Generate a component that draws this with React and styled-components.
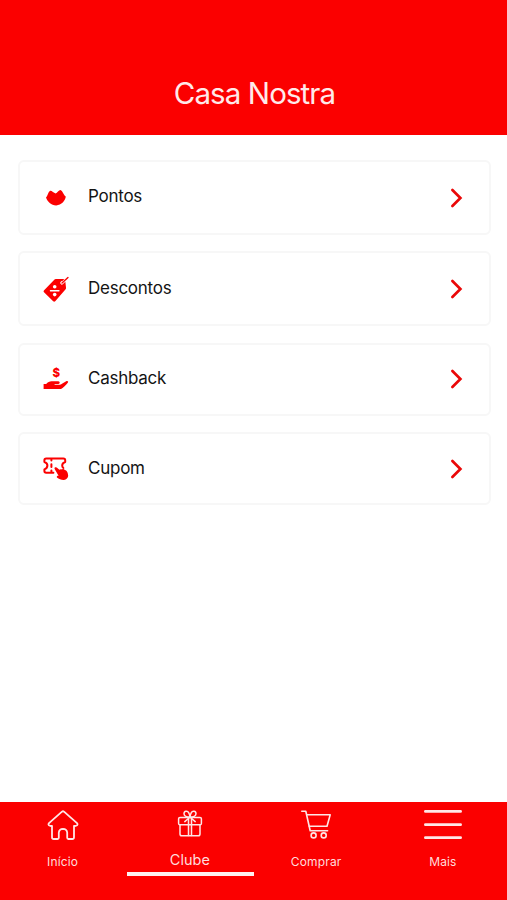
import React from 'react';
import styled, { createGlobalStyle } from 'styled-components';

const RED = '#fb0000';

const PointsIcon = () => (
  <RowIcon viewBox="0 0 28 28">
    <path
      fill={RED}
      d="M4 13.6 C5.4 12.4 6.2 8.2 7.8 7 C9.4 6.2 11.6 9 13.6 9.4 C15.2 9 16.8 6 18.4 6 C20.6 6.6 21.6 11 23.8 12.6 C23.4 16.8 19.4 21.2 14.2 21.4 C9.2 21.4 5.4 17.8 4 13.6 Z"
    />
  </RowIcon>
);

const DiscountIcon = () => (
  <RowIcon viewBox="0 0 28 28">
    <path fill={RED} d="M1.9 15.4 L11.8 5.2 Q12.8 4.2 14 4.1 L21.2 3.9 Q23 3.9 23.2 5.6 L24 12.4 Q24.2 13.6 23.4 14.6 L13.2 26.3 Q12.2 27.2 11.2 26.3 L2 17.2 Q1.1 16.3 1.9 15.4 Z" />
    <circle cx="20" cy="7.6" r="1.5" fill="#fff" />
    <path d="M19 9 L26 2.6" stroke="#fff" strokeWidth="2.6" />
    <path d="M20 8 L26 2.6" stroke={RED} strokeWidth="1.4" strokeLinecap="round" />
    <g fill="#fff">
      <circle cx="12.7" cy="11.7" r="1.8" />
      <circle cx="12.7" cy="19.6" r="1.8" />
      <rect x="7.8" y="14.9" width="9.8" height="1.5" rx="0.6" />
    </g>
  </RowIcon>
);

const CashbackIcon = () => (
  <RowIcon viewBox="0 0 28 28">
    <DollarSign x="14.2" y="12.4">$</DollarSign>
    <path
      fill={RED}
      d="M1.6 19 H4.2 C6 16.6 8.2 16 10.6 16.3 H16.4 C18.2 16.4 18.2 18.8 16.4 19 H12.6 V19.8 H18 C19.4 19.6 22 17.2 24.2 16.2 C25.6 15.6 26.8 16.6 25.8 17.8 C23.6 20.4 21 23.4 19 24 H1.6 Z"
    />
  </RowIcon>
);

const CouponIcon = () => (
  <RowIcon viewBox="0 0 28 28">
    <g fill="none" stroke={RED} strokeWidth="2" strokeLinecap="round" strokeLinejoin="round">
      <path d="M11.4 17.8 H4.2 Q2.4 17.8 2.4 16 V14.4 Q5.4 13.4 5.4 10.6 Q5.4 7.8 2.4 7 V5.2 Q2.4 3.4 4.2 3.4 H21.4 Q23.2 3.4 23.2 5.2 V7 Q20.2 8 20.2 10.6 Q20.2 12.2 21.4 13" />
      <path d="M9.4 4.2 V5.6 M9.4 9.2 V12 M9.4 15.6 V17" />
    </g>
    <path
      fill={RED}
      d="M12.8 12.6 C13.6 11.6 14.8 12.4 15.6 13.2 L17.4 14.8 C18.2 14 19.2 14 20 14.6 C21 13.8 22 14 22.8 15 C25.4 15.4 26 18.4 26.2 20.8 C26 23 24.4 24.6 22 24.9 C19.2 25 17 24 14.9 22.4 C14.4 21 15.6 20.6 16.6 20.8 L13.2 15 C12.6 14 12.2 13.4 12.8 12.6 Z"
    />
  </RowIcon>
);

const HomeIcon = () => (
  <NavIcon width="32" height="32" viewBox="0 0 32 32" strokeWidth="1.8">
    <path d="M15 1.7 Q16 0.9 17 1.7 L30 13.2 Q31 14.4 30 15.4 Q29.2 16 28 16 H27 V27.2 Q27 29 25.2 29 H21.4 Q20.2 29 20.2 27.8 V22.6 Q19.8 19 16 18.9 Q12.2 19 11.8 22.6 V27.8 Q11.8 29 10.6 29 H6.8 Q5 29 5 27.2 V16 H4 Q2.8 16 2 15.4 Q1 14.4 2 13.2 Z" />
  </NavIcon>
);

const GiftIcon = () => (
  <NavIcon width="26" height="32" viewBox="0 0 26 32" strokeWidth="1.5">
    <rect x="1.6" y="7.4" width="22.8" height="7.4" rx="1.4" />
    <path d="M3 14.8 V24 Q3 25.8 4.8 25.8 H21.2 Q23 25.8 23 24 V14.8" />
    <path d="M11.5 7.6 V25.6 M14.5 7.6 V25.6" />
    <path d="M13 7.2 C10.6 7.2 7.2 6.4 7 3.8 C7 0.8 10.6 0.6 11.8 2.8 Q12.8 4.6 13 7.2 Z M13 7.2 C15.4 7.2 18.8 6.4 19 3.8 C19 0.8 15.4 0.6 14.2 2.8 Q13.2 4.6 13 7.2 Z" />
    <path d="M12 8 L7.8 11.6 M14 8 L18.2 11.6" />
  </NavIcon>
);

const CartIcon = () => (
  <NavIcon width="32" height="32" viewBox="0 0 32 32" strokeWidth="1.6">
    <path d="M1.8 1.2 H5.8 L10.2 20.8 H27.6" />
    <path d="M6.8 4.8 H30.2 L27 16.2 H9.3" />
    <circle cx="13.6" cy="25.4" r="2.5" />
    <circle cx="23.7" cy="25.4" r="2.5" />
  </NavIcon>
);

const MenuIcon = () => (
  <NavIcon width="38" height="32" viewBox="0 0 38 32" strokeWidth="2.8">
    <path d="M1.4 1.4 H36.6 M1.4 14.7 H36.6 M1.4 27.7 H36.6" />
  </NavIcon>
);

const options = [
  { label: 'Pontos', height: 75, Icon: PointsIcon },
  { label: 'Descontos', height: 75, Icon: DiscountIcon },
  { label: 'Cashback', height: 73, Icon: CashbackIcon },
  { label: 'Cupom', height: 73, Icon: CouponIcon },
];

const tabs = [
  { label: 'Início', Icon: HomeIcon },
  { label: 'Clube', Icon: GiftIcon, active: true },
  { label: 'Comprar', Icon: CartIcon },
  { label: 'Mais', Icon: MenuIcon },
];

function App() {
  return (
    <Screen>
      <GlobalStyle />
      <Header>
        <Title>Casa Nostra</Title>
      </Header>
      <OptionList>
        {options.map(({ label, height, Icon }) => (
          <OptionCard key={label} $height={height}>
            <Icon />
            <OptionLabel $compact={height < 75}>{label}</OptionLabel>
            <Chevron viewBox="0 0 14 22">
              <path d="M2.4 3 L10.4 11 L2.4 19" />
            </Chevron>
          </OptionCard>
        ))}
      </OptionList>
      <TabBar>
        {tabs.map(({ label, Icon, active }) => (
          <Tab key={label} $active={active}>
            <Icon />
            <TabLabel $active={active}>{label}</TabLabel>
          </Tab>
        ))}
      </TabBar>
    </Screen>
  );
}

const GlobalStyle = createGlobalStyle`
  body {
    background-color: #ffffff;
    font-family: Inter, 'Liberation Sans', sans-serif;
    margin: 0;
  }
`;
const Screen = styled.div`
  display: flex;
  flex-direction: column;
  height: 900px;
  width: 507px;
`;
const Header = styled.header`
  align-items: flex-end;
  background-color: ${RED};
  box-sizing: border-box;
  display: flex;
  height: 135px;
  justify-content: center;
  padding: 0 0 22px 2px;
`;
const Title = styled.h1`
  color: #ffeaea;
  font-size: 29.5px;
  font-weight: 400;
  letter-spacing: -0.9px;
  line-height: 40px;
  margin: 0;
`;
const OptionList = styled.main`
  display: flex;
  flex: 1;
  flex-direction: column;
  gap: 16.4px;
  padding: 25px 16px 0 18px;
`;
const OptionCard = styled.div`
  align-items: center;
  border: 2px solid #f7f7f7;
  border-radius: 6px;
  box-sizing: border-box;
  display: flex;
  height: ${props => props.$height}px;
  padding: 0 25.5px 0 22px;
`;
const RowIcon = styled.svg`
  flex: none;
  height: 28px;
  width: 28px;
`;
const DollarSign = styled.text`
  fill: ${RED};
  font-size: 11.5px;
  font-weight: 800;
  text-anchor: middle;
`;
const OptionLabel = styled.span`
  color: #141414;
  flex: 1;
  font-size: 17px;
  letter-spacing: -0.25px;
  line-height: 22px;
  padding: 0 0 ${props => (props.$compact ? 1.6 : 2.4)}px 18px;
`;
const Chevron = styled.svg`
  fill: none;
  height: 22px;
  stroke: #ea0808;
  stroke-linecap: round;
  stroke-width: 2.7;
  width: 14px;
`;
const TabBar = styled.nav`
  background-color: ${RED};
  display: flex;
  height: 98px;
`;
const Tab = styled.div`
  align-items: center;
  border-bottom: 4px solid ${props => (props.$active ? '#fff0f0' : 'transparent')};
  box-sizing: border-box;
  display: flex;
  flex: none;
  flex-direction: column;
  height: 74px;
  padding: 8px ${props => (props.$active ? 0.5 : 1.5)}px 0 0;
  width: 25%;
`;
const NavIcon = styled.svg`
  fill: none;
  flex: none;
  stroke: #ffe6e6;
  stroke-linecap: round;
  stroke-linejoin: round;
`;
const TabLabel = styled.span`
  color: #ffdcdc;
  font-size: ${props => (props.$active ? 14.5 : 12)}px;
  letter-spacing: ${props => (props.$active ? 0 : 0.15)}px;
  line-height: 16px;
  margin-top: ${props => (props.$active ? 10 : 11.5)}px;
`;

export default App;
